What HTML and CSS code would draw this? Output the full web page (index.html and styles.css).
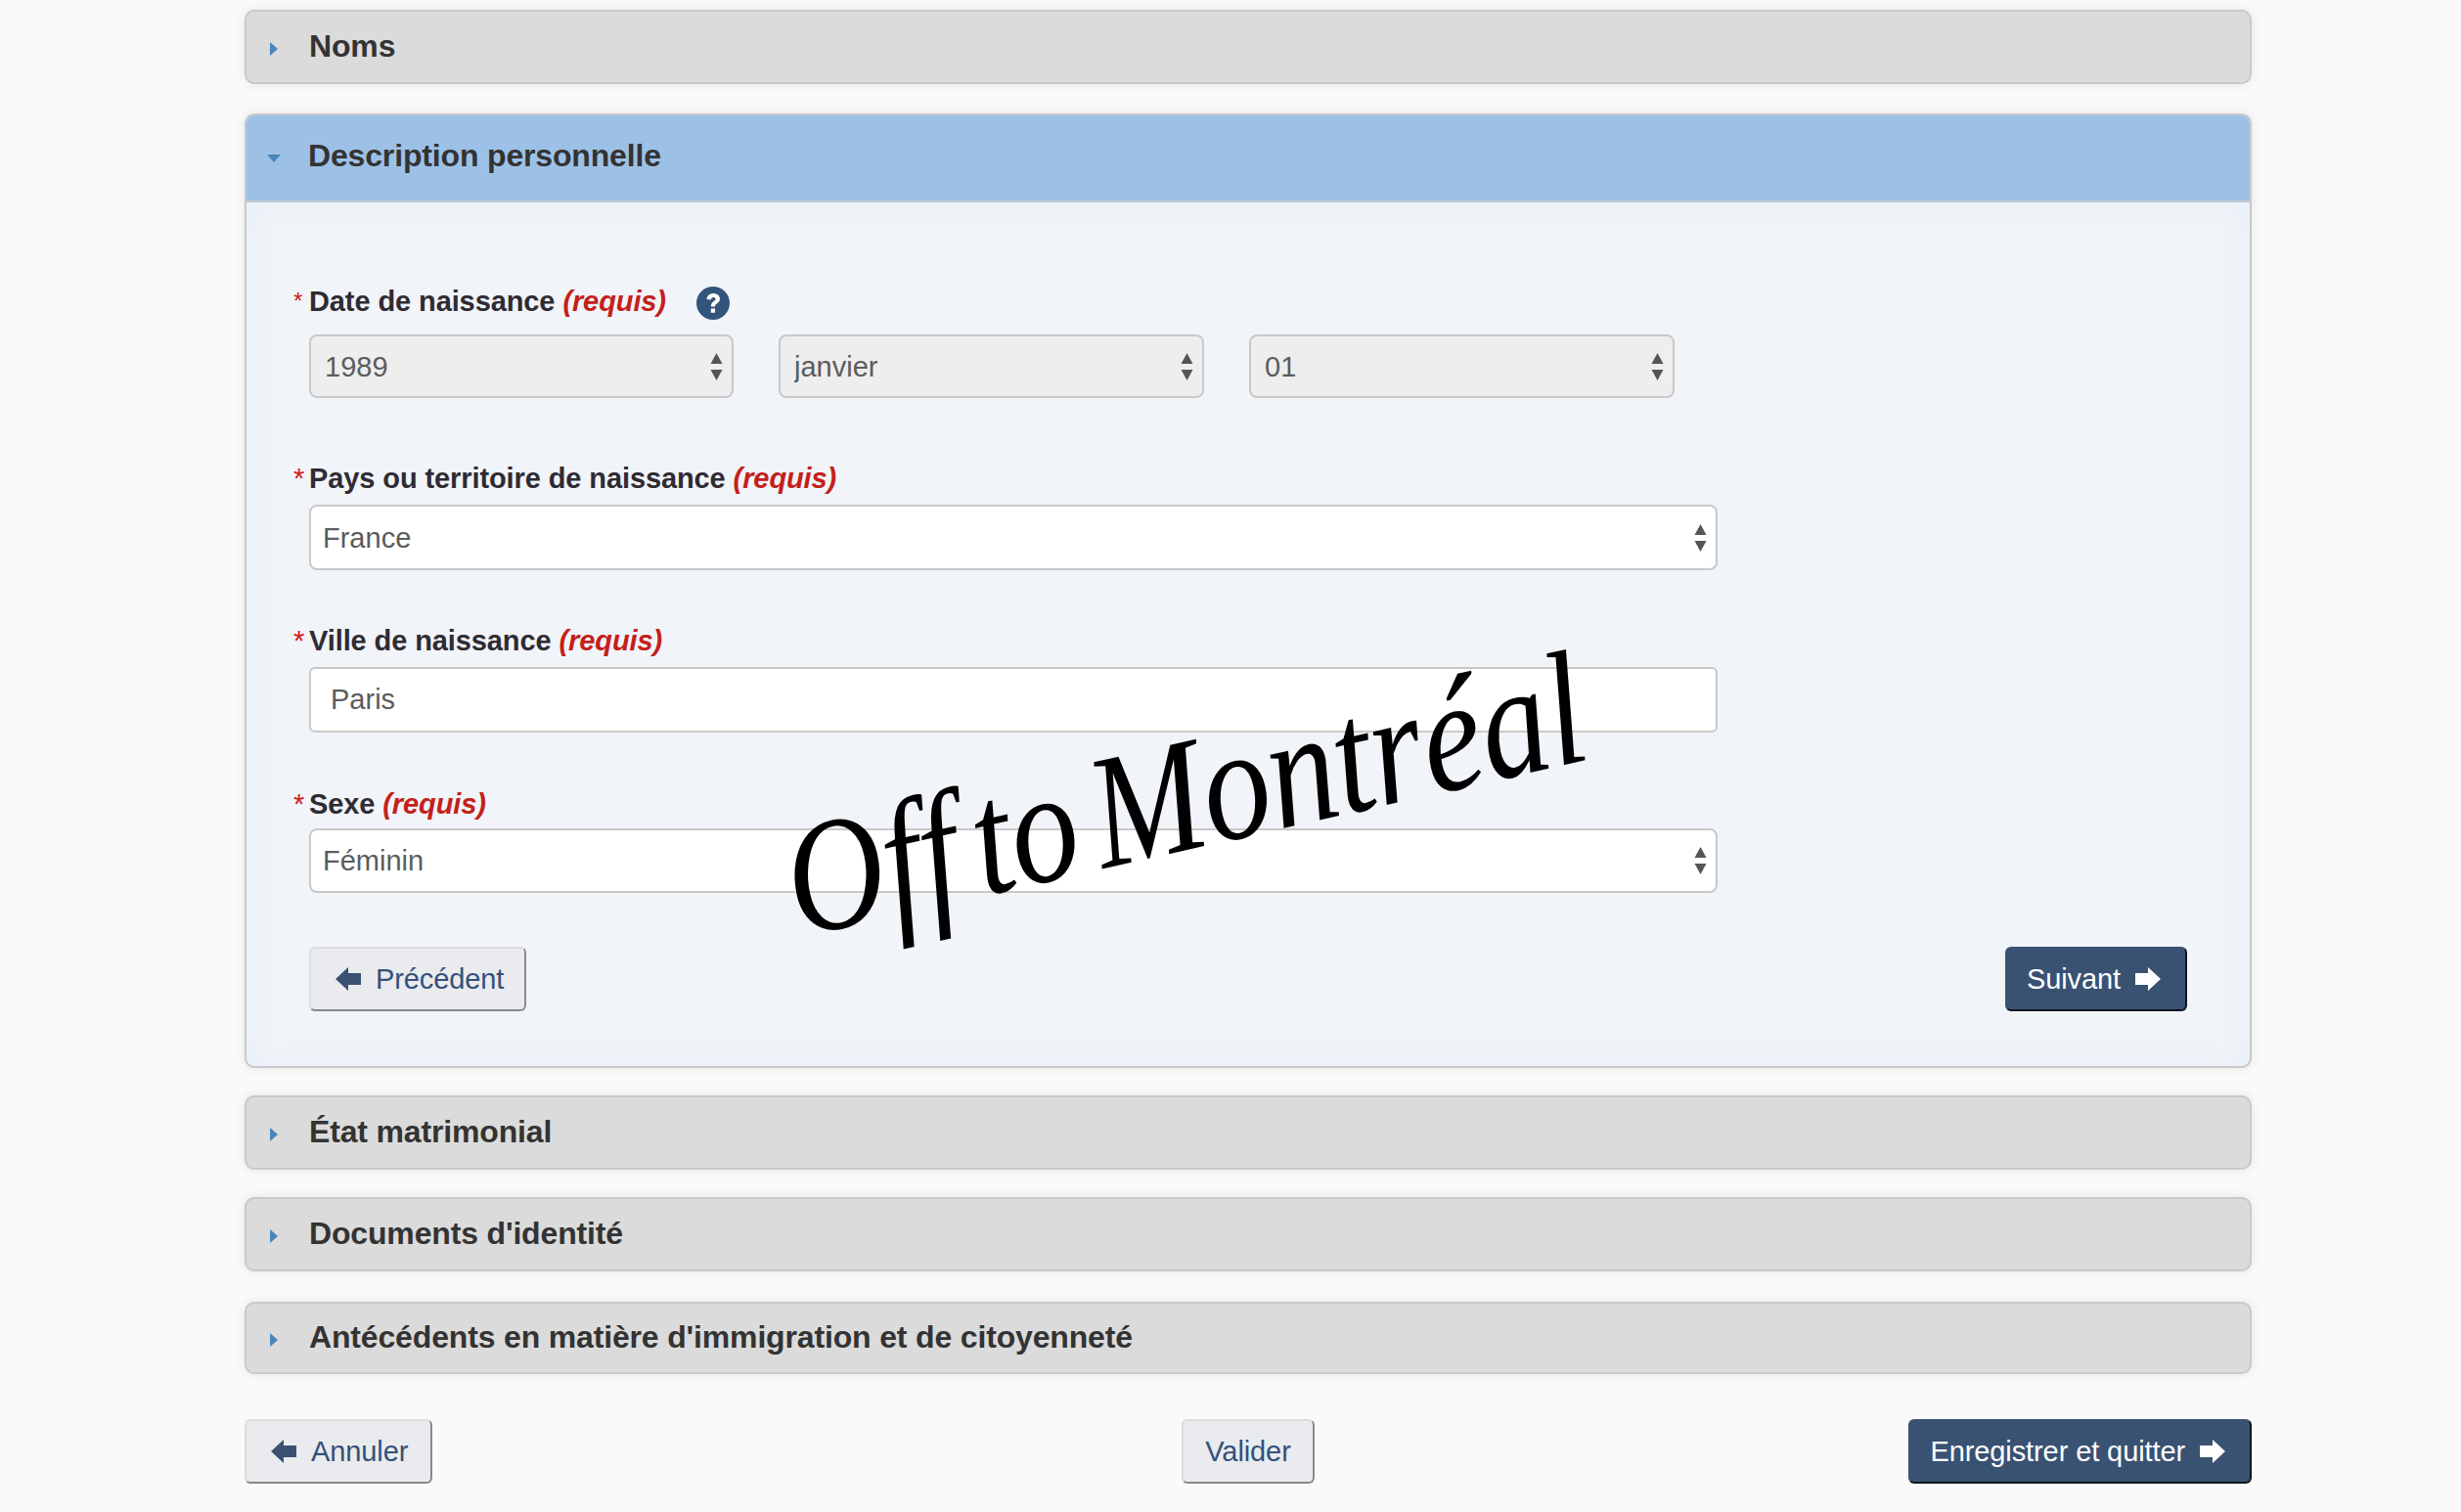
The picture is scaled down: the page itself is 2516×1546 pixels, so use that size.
FILE: index.html
```html
<!DOCTYPE html>
<html lang="fr">

<head>
    <meta charset="utf-8">
    <title>Description personnelle</title>
    <link rel="stylesheet" href="styles.css">
</head>

<body>
    <div class="page">
        <div class="panel">
            <div class="panel-head"><span class="caret-right"></span><h2>Noms</h2></div>
        </div>

        <div class="panel panel-open">
            <div class="panel-head"><span class="caret-down"></span><h2>Description personnelle</h2></div>
            <form class="panel-body">
                <div class="label label-first"><span class="star star-small">*</span>Date de naissance <em>(requis)</em>
                    <svg class="help" viewBox="0 0 34 34">
                        <circle cx="17" cy="17" r="17" fill="#33557c"></circle>
                        <path d="M10.5 13c.4-4 3.300-6 6.800-6 3.800 0 6.700 2.200 6.700 5.600 0 2.600-1.500 3.800-3.200 5-1.300.9-1.800 1.500-1.800 3h-4.200c0-2.800.8-4.100 2.700-5.400 1.300-.9 2.100-1.500 2.100-2.500 0-1.100-.9-1.800-2.200-1.800-1.500 0-2.400.9-2.600 2.600z M14.800 22.500h4.200v4.200h-4.200z" fill="#fff"></path>
                    </svg>
                </div>
                <div class="date-row">
                    <div class="select-box date-select">
                        <select disabled><option>1989</option></select>
                        <svg class="updown" viewBox="0 0 12 28"><path d="M6 0l6 11H0zM0 17h12L6 28z"></path></svg>
                    </div>
                    <div class="select-box date-select date-wide">
                        <select disabled><option>janvier</option></select>
                        <svg class="updown" viewBox="0 0 12 28"><path d="M6 0l6 11H0zM0 17h12L6 28z"></path></svg>
                    </div>
                    <div class="select-box date-select date-wide">
                        <select disabled><option>01</option></select>
                        <svg class="updown" viewBox="0 0 12 28"><path d="M6 0l6 11H0zM0 17h12L6 28z"></path></svg>
                    </div>
                </div>

                <div class="label label-pays"><span class="star">*</span>Pays ou territoire de naissance <em>(requis)</em></div>
                <div class="select-box">
                    <select><option>France</option></select>
                    <svg class="updown" viewBox="0 0 12 28"><path d="M6 0l6 11H0zM0 17h12L6 28z"></path></svg>
                </div>

                <div class="label label-ville"><span class="star">*</span>Ville de naissance <em>(requis)</em></div>
                <input class="text-input" type="text" value="Paris">

                <div class="label label-sexe"><span class="star">*</span>Sexe <em>(requis)</em></div>
                <div class="select-box select-short">
                    <select><option>Féminin</option></select>
                    <svg class="updown" viewBox="0 0 12 28"><path d="M6 0l6 11H0zM0 17h12L6 28z"></path></svg>
                </div>

                <div class="form-nav">
                    <button type="button" class="btn">
                        <svg class="arrow" viewBox="0 0 26 24"><path d="M0 12L13 0v6h13v12H13v6z"></path></svg>Précédent
                    </button>
                    <button type="button" class="btn btn-primary">
                        Suivant<svg class="arrow arrow-next" viewBox="0 0 26 24"><path d="M26 12L13 0v6H0v12h13v6z"></path></svg>
                    </button>
                </div>
            </form>
        </div>

        <div class="panel">
            <div class="panel-head"><span class="caret-right"></span><h2>État matrimonial</h2></div>
        </div>
        <div class="panel">
            <div class="panel-head"><span class="caret-right"></span><h2>Documents d'identité</h2></div>
        </div>
        <div class="panel panel-last">
            <div class="panel-head"><span class="caret-right"></span><h2>Antécédents en matière d'immigration et de citoyenneté</h2></div>
        </div>

        <div class="page-nav">
            <button type="button" class="btn btn-cancel">
                <svg class="arrow" viewBox="0 0 26 24"><path d="M0 12L13 0v6h13v12H13v6z"></path></svg>Annuler
            </button>
            <button type="button" class="btn btn-valider">Valider</button>
            <button type="button" class="btn btn-primary btn-save">
                Enregistrer et quitter<svg class="arrow arrow-next" viewBox="0 0 26 24"><path d="M26 12L13 0v6H0v12h13v6z"></path></svg>
            </button>
        </div>
    </div>

    <div class="stamp">Off to Montréal</div>
</body>

</html>
```

FILE: styles.css
```css
/* Page */
html,
body {
    margin: 0;
    padding: 0;
    height: 1546px;
    overflow: hidden;
}

body {
    background-color: #fafafa;
    color: #333333;
    font-family: "Liberation Sans", Arial, sans-serif;
    position: relative;
}

.page {
    width: 2052px;
    margin-left: 250px;
    padding-top: 10px;
}

/* Accordion panels */
.panel {
    box-sizing: border-box;
    height: 76px;
    margin-bottom: 28px;
    border: 2px solid #c9c9c9;
    border-radius: 10px;
    background-color: #dbdbdb;
    box-shadow: 0 0 12px rgba(0, 0, 0, 0.09);
}

.panel-open {
    height: 976px;
    margin-top: 30px;
    background-color: #f1f4f8;
    overflow: hidden;
}

.panel-last {
    height: 74px;
    margin-top: 31px;
}

.panel-last .panel-head {
    height: 70px;
}

.panel-head {
    display: flex;
    align-items: center;
    height: 72px;
    padding-left: 24px;
}

.panel-open .panel-head {
    height: 87px;
    background-color: #9dc1e6;
    border-bottom: 2px solid #c4cbd3;
    padding-left: 21px;
}

.panel-head h2 {
    margin: 0;
    font-size: 32px;
    font-weight: bold;
    letter-spacing: -0.16px;
    color: #333333;
    margin-left: 32px;
    position: relative;
    top: -1px;
}

.panel-open .panel-head h2 {
    margin-left: 28px;
    top: -2px;
}

.caret-right {
    width: 0;
    height: 0;
    margin-top: 3px;
    border-left: 8px solid #4a86bb;
    border-top: 7px solid transparent;
    border-bottom: 7px solid transparent;
}

.caret-down {
    width: 0;
    height: 0;
    margin-top: 0;
    border-top: 8px solid #4a86bb;
    border-left: 7px solid transparent;
    border-right: 7px solid transparent;
}

.panel-body {
    height: 885px;
    box-sizing: border-box;
    padding: 81px 0 0 64px;
    box-shadow: inset 0 0 30px rgba(210, 225, 250, 0.35);
}

/* Form fields */
.label {
    height: 40px;
    line-height: 40px;
    font-size: 29px;
    font-weight: bold;
    letter-spacing: -0.1px;
    color: #2f2b33;
    margin-left: -16px;
    margin-bottom: 7px;
    white-space: nowrap;
}

.label em {
    color: #c4201a;
    font-style: italic;
}

.label-first {
    display: flex;
    align-items: center;
    gap: 8px;
    margin-bottom: 14px;
}

.label-pays {
    margin-top: 62px;
}

.label-ville {
    margin-top: 52px;
}

.label-sexe {
    margin-top: 53px;
    margin-bottom: 5px;
}

.star {
    display: inline-block;
    width: 16px;
    color: #d0201c;
    font-weight: normal;
}

.star-small {
    margin-right: -8px;
    font-size: 24px;
}

.help {
    width: 34px;
    height: 34px;
    margin-left: 23px;
    margin-top: 3px;
}

.date-row {
    display: flex;
    gap: 46px;
}

.select-box {
    position: relative;
    width: 1440px;
    height: 67px;
}

.select-short {
    height: 66px;
}

.date-select {
    width: 434px;
    height: 65px;
}

.date-wide {
    width: 435px;
}

.select-box select {
    width: 100%;
    height: 100%;
    box-sizing: border-box;
    padding: 0 40px 0 12px;
    border: 2px solid #c9c9c9;
    border-radius: 8px;
    background-color: #ffffff;
    color: #5c5c5c;
    font-family: "Liberation Sans", Arial, sans-serif;
    font-size: 29px;
    opacity: 1;
    appearance: none;
    -webkit-appearance: none;
}

.date-select select {
    padding-left: 14px;
    background-color: #eeeeee;
}

.updown {
    position: absolute;
    right: 11px;
    top: 50%;
    width: 13px;
    height: 28px;
    margin-top: -14px;
    fill: #555555;
}

.text-input {
    display: block;
    width: 1440px;
    height: 67px;
    box-sizing: border-box;
    padding: 0 20px;
    border: 2px solid #c9c9c9;
    border-radius: 6px;
    background-color: #ffffff;
    color: #5c5c5c;
    font-family: "Liberation Sans", Arial, sans-serif;
    font-size: 29px;
}

/* Buttons */
.form-nav {
    display: flex;
    justify-content: space-between;
    width: 1920px;
    margin-top: 55px;
}

.page-nav {
    display: flex;
    margin-top: 46px;
}

.btn {
    display: flex;
    align-items: center;
    height: 66px;
    box-sizing: border-box;
    padding: 0 21px 0 25px;
    border: 2px solid #dcdcdc;
    border-right-color: #8a8a8a;
    border-bottom-color: #8a8a8a;
    border-radius: 6px;
    background-color: #e9ebee;
    color: #35507a;
    font-family: "Liberation Sans", Arial, sans-serif;
    font-size: 29px;
    letter-spacing: -0.1px;
}

.btn-primary {
    padding: 0 25px 0 20px;
    border-color: #3a5272;
    border-right-color: #10151d;
    border-bottom-color: #10151d;
    background-color: #3a5272;
    color: #ffffff;
}

.btn-cancel {
    padding-right: 23px;
}

.btn-valider {
    margin-left: 766px;
    padding: 0 22px;
}

.btn-save {
    margin-left: auto;
}

.arrow {
    width: 26px;
    height: 24px;
    margin-right: 15px;
    fill: #3a5272;
    flex: none;
}

.arrow-next {
    margin-left: 15px;
    margin-right: 0;
    fill: #ffffff;
}

/* Handwritten stamp over the form */
.stamp {
    position: absolute;
    left: 795px;
    top: 744px;
    font-family: "Liberation Serif", "Times New Roman", serif;
    font-style: italic;
    font-size: 138px;
    word-spacing: -17px;
    line-height: 1;
    color: #000000;
    white-space: nowrap;
    transform: rotate(-12.7deg) scaleY(1.2);
    transform-origin: center;
}
```
